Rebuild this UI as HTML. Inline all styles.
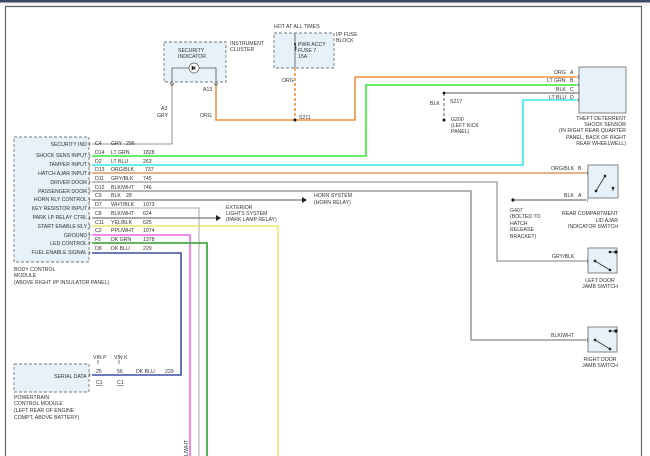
<!DOCTYPE html>
<html><head><meta charset="utf-8"><style>
html,body{margin:0;padding:0;background:#fff;}
svg{display:block;}
text{font-family:"Liberation Sans",sans-serif;font-size:5.2px;fill:#333;}
</style></head><body>
<svg width="650" height="456" viewBox="0 0 650 456" xmlns="http://www.w3.org/2000/svg">
<rect x="0" y="0" width="650" height="456" fill="#fff"/>
<rect x="0" y="0" width="650" height="2.5" fill="#3a4a5e"/>
<rect x="0" y="2.5" width="650" height="3" fill="#f4f4f4"/>
<path d="M5.5 456 V6.5 H641.5 V456" fill="none" stroke="#666" stroke-width="1.2"/>

<g fill="#e6f1fa" stroke="#777" stroke-width="0.9" stroke-dasharray="3,2">
<rect x="14" y="137" width="75" height="125"/>
<rect x="164" y="42" width="62" height="40"/>
<rect x="274" y="33" width="60" height="35"/>
<rect x="14" y="364" width="75" height="28"/>
</g>
<g fill="#e6f1fa" stroke="#777" stroke-width="0.9">
<rect x="579" y="67" width="47" height="46"/>
<rect x="588" y="165" width="30" height="33"/>
<rect x="588" y="248" width="29" height="25"/>
<rect x="588" y="327" width="29" height="25"/>
</g>

<g fill="none" stroke-width="1.3">
<path d="M92 144 H172 V86" stroke="#aaa"/>
<path d="M216 86 V120 H355 V77 H577" stroke="#f5923a" stroke-width="1.6"/>
<path d="M295 68 V120" stroke="#f5923a" stroke-width="1.6" stroke-dasharray="3,2"/>
<path d="M92 156 H366 V85 H577" stroke="#33e833" stroke-width="1.6"/>
<path d="M92 165 H523 V100 H577" stroke="#33e8ee" stroke-width="1.6"/>
<path d="M92 173 H586" stroke="#d9824a"/>
<path d="M92 182 H497 V261 H586" stroke="#999"/>
<path d="M92 191 H471 V340 H586" stroke="#888"/>
<path d="M92 200 H302" stroke="#777"/>
<path d="M92 208 H199 V456" stroke="#bbb"/>
<path d="M92 218 H216" stroke="#777"/>
<path d="M92 226 H278 V456" stroke="#e3e34a"/>
<path d="M92 235 H190 V456" stroke="#ee44ee"/>
<path d="M92 243 H207 V456" stroke="#2b9e2b" stroke-width="1.6"/>
<path d="M92 253 H181 V375 H92" stroke="#3a4fa8" stroke-width="1.6"/>
<path d="M444 93 H577" stroke="#777"/>
<path d="M444 93 V118" stroke="#555" stroke-dasharray="3,2" stroke-width="1"/>
<path d="M515 200 H586" stroke="#777"/>
</g>
<polygon points="302,197 307,200 302,203" fill="#222"/>
<polygon points="216,215 221,218 216,221" fill="#222"/>
<g fill="#111"><circle cx="295" cy="120" r="1.5"/><circle cx="444" cy="93" r="1.4"/><circle cx="444" cy="120" r="1.5"/><circle cx="513" cy="200" r="1.6"/></g>

<g fill="none" stroke="#666" stroke-width="0.7">
<path d="M89 142 q2 2 0 4 M89 154 q2 2 0 4 M89 163 q2 2 0 4 M89 171 q2 2 0 4 M89 180 q2 2 0 4 M89 189 q2 2 0 4 M89 198 q2 2 0 4 M89 206 q2 2 0 4 M89 216 q2 2 0 4 M89 224 q2 2 0 4 M89 233 q2 2 0 4 M89 241 q2 2 0 4 M89 251 q2 2 0 4 M89 373 q2 2 0 4"/>
<path d="M579 75 q-2 2 0 4 M579 83 q-2 2 0 4 M579 91 q-2 2 0 4 M579 98 q-2 2 0 4"/>
<path d="M588 171 q-2 2 0 4 M588 198 q-2 2 0 4 M588 259 q-2 2 0 4 M588 338 q-2 2 0 4"/>
<path d="M170 83 l2 3 l2 -3 M214 83 l2 3 l2 -3"/>
</g>
<path d="M172 86 V68 H216 V86" fill="none" stroke="#555" stroke-width="0.8"/>
<circle cx="194" cy="68" r="5" fill="#fff" stroke="#555" stroke-width="0.7"/>
<path d="M192 66 v4 l3 -2 z M195 66 v4" fill="#222" stroke="#222" stroke-width="0.6"/>
<path d="M295 33 V68" stroke="#555" stroke-width="0.8"/>
<path d="M295 45 q2 3 0 6" fill="none" stroke="#222" stroke-width="0.8"/>
<circle cx="295" cy="44" r="1" fill="#111"/>
<g stroke="#333" stroke-width="0.8" fill="#111">
<path d="M596 191 L605 176"/><circle cx="605" cy="176" r="1"/><circle cx="596" cy="191" r="1"/><path d="M613 191 v-3"/><circle cx="613" cy="188" r="1"/>
<path d="M595 261 L610 270"/><circle cx="595" cy="261" r="1"/><circle cx="610" cy="270" r="1"/><path d="M610 252 h6"/><circle cx="610" cy="252" r="1"/><circle cx="616" cy="252" r="1.4"/>
<path d="M595 340 L610 349"/><circle cx="595" cy="340" r="1"/><circle cx="610" cy="349" r="1"/><path d="M610 331 h6"/><circle cx="610" cy="331" r="1"/><circle cx="616" cy="331" r="1.4"/>
</g>

<g text-anchor="end">
<text x="87" y="146">SECURITY IND</text>
<text x="87" y="157">SHOCK SENS INPUT</text>
<text x="87" y="166">TAMPER INPUT</text>
<text x="87" y="175">HATCH AJAR INPUT</text>
<text x="87" y="184">DRIVER DOOR</text>
<text x="87" y="193">PASSENGER DOOR</text>
<text x="87" y="201">HORN RLY CONTROL</text>
<text x="87" y="210">KEY RESISTOR INPUT</text>
<text x="87" y="219">PARK LP RELAY CTRL</text>
<text x="87" y="228">START ENABLE RLY</text>
<text x="87" y="237">GROUND</text>
<text x="87" y="245">LED CONTROL</text>
<text x="87" y="254">FUEL ENABLE SIGNAL</text>
</g>
<g>
<text x="95" y="145">C4</text><text x="111" y="145">GRY</text><text x="126" y="145">296</text>
<text x="95" y="154">D14</text><text x="111" y="154">LT GRN</text><text x="143" y="154">1828</text>
<text x="95" y="163">D2</text><text x="111" y="163">LT BLU</text><text x="143" y="163">263</text>
<text x="95" y="171">D13</text><text x="111" y="171">ORG/BLK</text><text x="145" y="171">737</text>
<text x="95" y="180">D11</text><text x="111" y="180">GRY/BLK</text><text x="143" y="180">745</text>
<text x="95" y="189">D12</text><text x="111" y="189">BLK/WHT</text><text x="143" y="189">746</text>
<text x="95" y="197">C9</text><text x="111" y="197">BLK</text><text x="126" y="197">28</text>
<text x="95" y="206">D7</text><text x="111" y="206">WHT/BLK</text><text x="143" y="206">1073</text>
<text x="95" y="215">C8</text><text x="111" y="215">BLK/WHT</text><text x="143" y="215">624</text>
<text x="95" y="224">C11</text><text x="111" y="224">YEL/BLK</text><text x="143" y="224">625</text>
<text x="95" y="232">C2</text><text x="111" y="232">PPL/WHT</text><text x="143" y="232">1074</text>
<text x="95" y="241">F5</text><text x="111" y="241">DK GRN</text><text x="143" y="241">1378</text>
<text x="95" y="250">D8</text><text x="111" y="250">DK BLU</text><text x="143" y="250">229</text>
<text x="14" y="271">BODY CONTROL</text>
<text x="14" y="277">MODULE</text>
<text x="14" y="284">(ABOVE RIGHT I/P INSULATOR PANEL)</text>

<text x="178" y="52">SECURITY</text><text x="178" y="58">INDICATOR</text>
<text x="230" y="45">INSTRUMENT</text><text x="230" y="51">CLUSTER</text>
<text x="161" y="110">A3</text><text x="203" y="91">A13</text>
<text x="157" y="117">GRY</text><text x="200" y="117">ORG</text>
<text x="274" y="28">HOT AT ALL TIMES</text>
<text x="298" y="46">PWR ACCY</text><text x="298" y="52">FUSE 7</text><text x="298" y="58">15A</text>
<text x="336" y="36">I/P FUSE</text><text x="336" y="42">BLOCK</text>
<text x="282" y="82">ORG</text>
<text x="299" y="119">S211</text>

<text x="554" y="74">ORG</text><text x="570" y="74">A</text>
<text x="547" y="82">LT GRN</text><text x="570" y="82">B</text>
<text x="556" y="91">BLK</text><text x="570" y="91">C</text>
<text x="549" y="99">LT BLU</text><text x="570" y="99">D</text>
<text x="450" y="103">S217</text><text x="430" y="105">BLK</text>
<text x="451" y="121">G200</text><text x="451" y="127">(LEFT KICK</text><text x="451" y="133">PANEL)</text>
<g text-anchor="end">
<text x="626" y="120">THEFT DETERRENT</text>
<text x="626" y="126">SHOCK SENSOR</text>
<text x="626" y="132">(IN RIGHT REAR QUARTER</text>
<text x="626" y="139">PANEL, BACK OF RIGHT</text>
<text x="626" y="145">REAR WHEELWELL)</text>
<text x="618" y="215">REAR COMPARTMENT</text>
<text x="618" y="222">LID AJAR</text>
<text x="618" y="228">INDICATOR SWITCH</text>
</g>
<text x="551" y="170">ORG/BLK</text><text x="578" y="170">B</text>
<text x="564" y="197">BLK</text><text x="578" y="197">A</text>
<text x="510" y="212">G407</text><text x="510" y="218">(BOLTED TO</text><text x="510" y="225">HATCH</text><text x="510" y="231">RELEASE</text><text x="510" y="238">BRACKET)</text>
<text x="552" y="258">GRY/BLK</text>
<text x="551" y="337">BLK/WHT</text>
<g text-anchor="middle">
<text x="600" y="282">LEFT DOOR</text><text x="600" y="288">JAMB SWITCH</text>
<text x="600" y="361">RIGHT DOOR</text><text x="600" y="367">JAMB SWITCH</text>
</g>
<text x="314" y="197">HORN SYSTEM</text><text x="314" y="204">(HORN RELAY)</text>
<text x="226" y="209">EXTERIOR</text><text x="226" y="215">LIGHTS SYSTEM</text><text x="226" y="221">(PARK LAMP RELAY)</text>

<text x="54" y="378">SERIAL DATA</text>
<text x="93" y="359">VIN P</text><text x="114" y="359">VIN K</text>
<text x="96" y="373">25</text><text x="117" y="373">56</text>
<text x="136" y="373">DK BLU</text><text x="165" y="373">229</text>
<text x="96" y="384" text-decoration="underline">C1</text><text x="117" y="384" text-decoration="underline">C1</text>
<text x="14" y="399">POWERTRAIN</text><text x="14" y="405">CONTROL MODULE</text><text x="14" y="412">(LEFT REAR OF ENGINE</text><text x="14" y="419">COMPT, ABOVE BATTERY)</text>
<text x="188" y="440" text-anchor="end" transform="rotate(-90 188 440)">PPL/WHT</text>
</g>
<path d="M98 360 v4 M119 360 v4" stroke="#333" stroke-width="0.6"/>
</svg>
</body></html>
